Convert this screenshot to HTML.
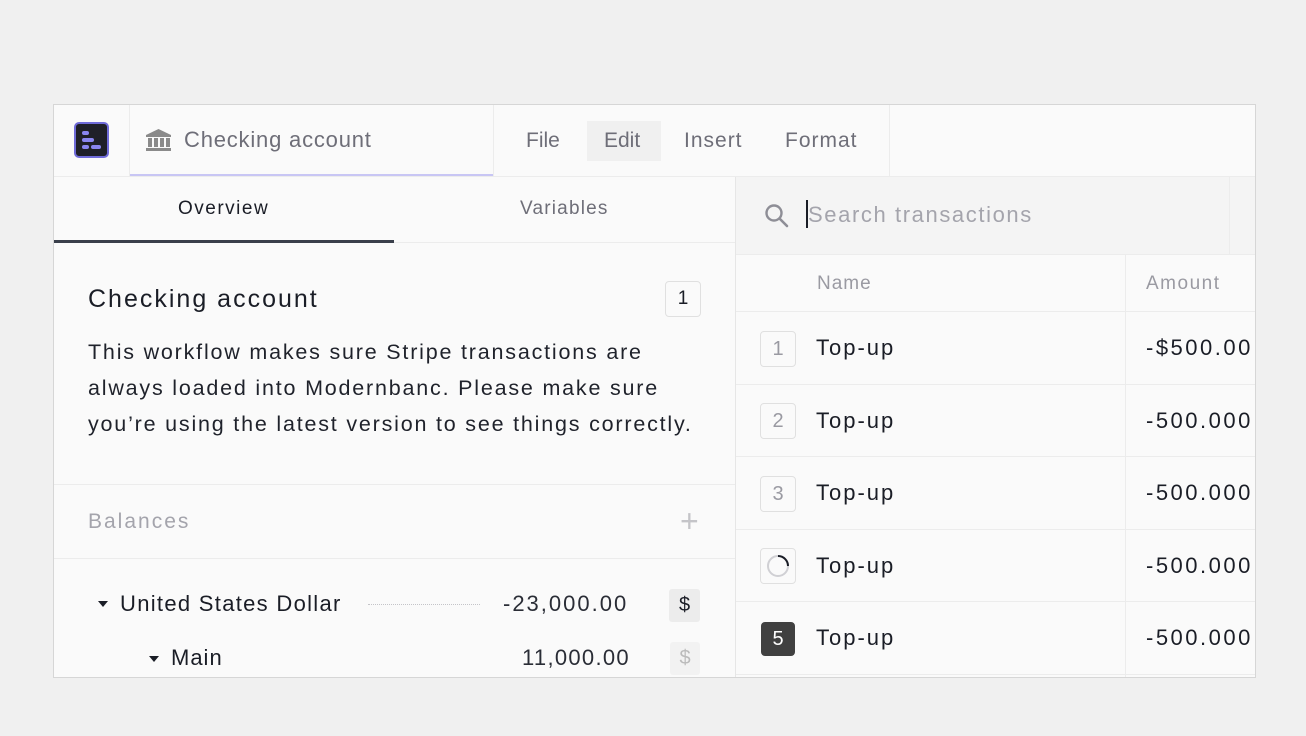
<!DOCTYPE html>
<html><head><meta charset="utf-8"><style>
*{box-sizing:border-box;margin:0;padding:0}
body{width:1306px;height:736px;background:#f0f0f0;font-family:"Liberation Sans",sans-serif;position:relative;overflow:hidden;color:#1a1d26}
.frame{position:absolute;left:53px;top:104px;width:1203px;height:574px;border:1px solid #d6d6d6;background:#fafafa;overflow:hidden}
.a{position:absolute}
.hl{position:absolute;height:1px;background:#ececec}
.vl{position:absolute;width:1px;background:#ececec}
.t{position:absolute;white-space:nowrap}
.badge{position:absolute;width:36px;height:36px;border:1px solid #e0e0e0;border-radius:4px;background:#fafafa;color:#9a9aa2;font-size:20px;text-align:center;line-height:34px}
.tu{letter-spacing:2px}
.am{letter-spacing:2.5px}
</style></head><body>
<div class="frame">
<div class="a" style="left:20px;top:17px;width:35px;height:36px;background:#1f2028;border:2px solid #6f6bd8;border-radius:5px">
<div class="a" style="left:6px;top:7px;width:7px;height:4px;background:#8a86f0;border-radius:2px"></div>
<div class="a" style="left:6px;top:14px;width:12px;height:4px;background:#8a86f0;border-radius:2px"></div>
<div class="a" style="left:6px;top:21px;width:7px;height:4px;background:#8a86f0;border-radius:2px"></div>
<div class="a" style="left:15px;top:21px;width:10px;height:4px;background:#8a86f0;border-radius:2px"></div>
</div>
<div class="vl" style="left:75px;top:0;height:71px"></div>
<svg class="a" style="left:92px;top:24px" width="25" height="22" viewBox="0 0 25 22"><path d="M12.5 0 L25 6 V8 H0 V6 Z" fill="#8a8a8a"/><rect x="2" y="9" width="4" height="9" fill="#8a8a8a"/><rect x="8" y="9" width="4" height="9" fill="#8a8a8a"/><rect x="14" y="9" width="4" height="9" fill="#8a8a8a"/><rect x="20" y="9" width="4" height="9" fill="#8a8a8a"/><rect x="0" y="19" width="25" height="3" fill="#8a8a8a"/></svg>
<div class="t" style="left:130px;top:22px;font-size:22px;color:#6e6e78;letter-spacing:0.8px">Checking account</div>
<div class="a" style="left:76px;top:69px;width:364px;height:2px;background:#c8c6f4"></div>
<div class="vl" style="left:439px;top:0;height:71px"></div>
<div class="a" style="left:533px;top:16px;width:74px;height:40px;background:#f0f0f0"></div>
<div class="t" style="left:472px;top:24px;font-size:21px;color:#6e6e78">File</div>
<div class="t" style="left:550px;top:24px;font-size:21px;color:#6e6e78">Edit</div>
<div class="t" style="left:630px;top:24px;font-size:21px;color:#6e6e78;letter-spacing:1px">Insert</div>
<div class="t" style="left:731px;top:24px;font-size:21px;color:#6e6e78;letter-spacing:1px">Format</div>
<div class="vl" style="left:835px;top:0;height:71px"></div>
<div class="hl" style="left:0;top:71px;width:1203px"></div>
<div class="t" style="left:124px;top:93px;font-size:19px;color:#1a1d26;letter-spacing:1.5px">Overview</div>
<div class="t" style="left:466px;top:93px;font-size:19px;color:#6e6e78;letter-spacing:1.2px">Variables</div>
<div class="a" style="left:0;top:135px;width:340px;height:3px;background:#3a3f4b"></div>
<div class="hl" style="left:340px;top:137px;width:341px"></div>
<div class="t" style="left:34px;top:180px;font-size:25px;color:#1a1d26;letter-spacing:2px">Checking account</div>
<div class="badge" style="left:611px;top:176px;color:#1a1d26;font-size:19px">1</div>
<div class="t" style="left:34px;top:229px;font-size:21.5px;line-height:36px;color:#1f222b;letter-spacing:1.8px">This workflow makes sure Stripe transactions are<br>always loaded into Modernbanc. Please make sure<br>you’re using the latest version to see things correctly.</div>
<div class="hl" style="left:0;top:379px;width:681px"></div>
<div class="t" style="left:34px;top:405px;font-size:21px;color:#a4a4ac;letter-spacing:2px">Balances</div>
<div class="t" style="left:626px;top:398px;font-size:32px;color:#c4c4c8;font-weight:300">+</div>
<div class="hl" style="left:0;top:453px;width:681px"></div>
<svg class="a" style="left:44px;top:496px" width="10" height="6"><path d="M0 0H10L5 6Z" fill="#1a1d26"/></svg>
<div class="t" style="left:66px;top:486px;font-size:22px;letter-spacing:1.3px">United States Dollar</div>
<div class="a" style="left:314px;top:499px;width:112px;border-top:1px dotted #c4c4c8"></div>
<div class="t" style="left:449px;top:486px;font-size:22px;color:#2a2d36;letter-spacing:2px">-23,000.00</div>
<div class="a" style="left:615px;top:484px;width:31px;height:33px;background:#ececec;border-radius:3px;font-size:20px;text-align:center;line-height:33px">$</div>
<svg class="a" style="left:95px;top:551px" width="10" height="6"><path d="M0 0H10L5 6Z" fill="#1a1d26"/></svg>
<div class="t" style="left:117px;top:540px;font-size:22px;letter-spacing:1px">Main</div>
<div class="t" style="left:468px;top:540px;font-size:22px;color:#2a2d36;letter-spacing:1.3px">11,000.00</div>
<div class="a" style="left:616px;top:537px;width:30px;height:33px;background:#f2f2f2;border-radius:3px;font-size:20px;text-align:center;line-height:33px;color:#bbb">$</div>
<div class="vl" style="left:681px;top:72px;height:502px;background:#e6e6e6"></div>
<div class="a" style="left:682px;top:72px;width:521px;height:77px;background:#f4f4f4"></div>
<svg class="a" style="left:710px;top:98px" width="26" height="26" viewBox="0 0 26 26"><circle cx="10" cy="10" r="7.5" fill="none" stroke="#8e8e96" stroke-width="2.4"/><path d="M15.5 15.5L23 23" stroke="#8e8e96" stroke-width="2.6" stroke-linecap="round"/></svg>
<div class="a" style="left:752px;top:95px;width:2px;height:28px;background:#1a1d26"></div>
<div class="t" style="left:754px;top:97px;font-size:22px;color:#a4a4ac;letter-spacing:1.6px">Search transactions</div>
<div class="vl" style="left:1175px;top:72px;height:77px"></div>
<div class="hl" style="left:682px;top:149px;width:521px"></div>
<div class="t" style="left:763px;top:168px;font-size:19px;color:#9a9aa2;letter-spacing:1px">Name</div>
<div class="t" style="left:1092px;top:168px;font-size:19px;color:#9a9aa2;letter-spacing:1.5px">Amount</div>
<div class="vl" style="left:1071px;top:150px;height:424px"></div>
<div class="hl" style="left:682px;top:206px;width:521px"></div>
<div class="hl" style="left:682px;top:279px;width:521px"></div>
<div class="hl" style="left:682px;top:351px;width:521px"></div>
<div class="hl" style="left:682px;top:424px;width:521px"></div>
<div class="hl" style="left:682px;top:496px;width:521px"></div>
<div class="hl" style="left:682px;top:569px;width:521px"></div>
<div class="badge" style="left:706px;top:226px">1</div>
<div class="badge" style="left:706px;top:298px">2</div>
<div class="badge" style="left:706px;top:371px">3</div>
<div class="badge" style="left:706px;top:443px"><svg width="34" height="34" style="position:absolute;left:0;top:0"><circle cx="17" cy="17" r="10" fill="none" stroke="#d0d0d4" stroke-width="2"/><path d="M17 7A10 10 0 0 1 27 17" fill="none" stroke="#1a1d26" stroke-width="2"/></svg></div>
<div class="badge" style="left:707px;top:517px;width:34px;height:34px;background:#404040;border:none;color:#fff;line-height:34px">5</div>
<div class="t tu" style="left:762px;top:230px;font-size:22px">Top-up</div>
<div class="t tu" style="left:762px;top:303px;font-size:22px">Top-up</div>
<div class="t tu" style="left:762px;top:375px;font-size:22px">Top-up</div>
<div class="t tu" style="left:762px;top:448px;font-size:22px">Top-up</div>
<div class="t tu" style="left:762px;top:520px;font-size:22px">Top-up</div>
<div class="t am" style="left:1092px;top:230px;font-size:22px">-$500.00</div>
<div class="t am" style="left:1092px;top:303px;font-size:22px">-500.000</div>
<div class="t am" style="left:1092px;top:375px;font-size:22px">-500.000</div>
<div class="t am" style="left:1092px;top:448px;font-size:22px">-500.000</div>
<div class="t am" style="left:1092px;top:520px;font-size:22px">-500.000</div>
</div>
</body></html>
